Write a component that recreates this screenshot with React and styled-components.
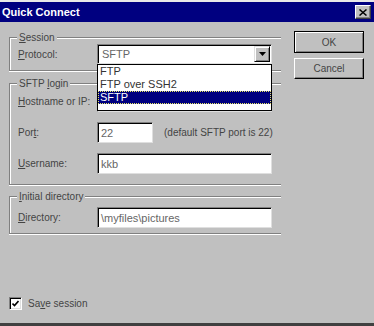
import React from 'react';
import styled, { createGlobalStyle } from 'styled-components';

const GlobalStyle = createGlobalStyle`
  html, body {
    margin: 0;
    padding: 0;
    background: #c0c0c0;
  }
  body {
    font-family: "Liberation Sans", Arial, sans-serif;
  }
`;

const Window = styled.div`
  width: 374px;
  height: 326px;
  box-sizing: border-box;
  background: #c0c0c0;
  border-top: 2px solid #e8e8e8;
  border-bottom: 3px solid #404040;
  display: flex;
  flex-direction: column;
  overflow: hidden;
`;

const TitleBar = styled.div`
  height: 20px;
  background: #000080;
  display: flex;
  align-items: center;
  justify-content: space-between;
  padding: 0 3px 0 2px;
`;

const Title = styled.span`
  color: #fff;
  font-weight: bold;
  font-size: 11px;
`;

const CloseButton = styled.div`
  width: 16px;
  height: 14px;
  box-sizing: border-box;
  background: #c0c0c0;
  border-top: 1px solid #fff;
  border-left: 1px solid #fff;
  border-right: 1px solid #404040;
  border-bottom: 1px solid #404040;
  box-shadow: inset -1px -1px 0 #808080;
  display: flex;
  align-items: center;
  justify-content: center;
`;

const Body = styled.div`
  flex: 1;
  display: flex;
  flex-direction: column;
  padding: 0 0 13px 9px;
`;

const Main = styled.div`
  display: flex;
  align-items: flex-start;
`;

const LeftColumn = styled.div`
  width: 272px;
  margin-top: 15px;
  display: flex;
  flex-direction: column;
`;

const ButtonColumn = styled.div`
  margin-left: 13px;
  margin-top: 9px;
  display: flex;
  flex-direction: column;
  gap: 5px;
`;

const Button = styled.div`
  width: 70px;
  height: ${p => (p.$default ? 22 : 21)}px;
  box-sizing: border-box;
  display: flex;
  align-items: center;
  justify-content: center;
  font-size: 10px;
  color: #444;
  background: #c0c0c0;
  border: 1px solid ${p => (p.$default ? '#000' : '#fff')};
  border-right-color: #000;
  border-bottom-color: #000;
  box-shadow: ${p =>
    p.$default
      ? 'inset 1px 1px 0 #fff, inset -1px -1px 0 #808080'
      : 'inset -1px -1px 0 #808080'};
`;

const Group = styled.div`
  position: relative;
  border: 1px solid #808080;
  border-right: none;
  box-shadow: inset 1px 1px 0 #fff, 0 1px 0 #fff;
  padding: ${p => p.$pad};
  margin-top: ${p => p.$mt || 0}px;
  display: flex;
  flex-direction: column;
  gap: 10px;
`;

const GroupLabel = styled.span`
  position: absolute;
  top: -7px;
  left: 7px;
  padding: 0 2px;
  background: #c0c0c0;
  font-size: 10px;
  line-height: 13px;
  color: #444;
`;

const Row = styled.div`
  display: grid;
  grid-template-columns: 79px auto;
  align-items: center;
`;

const Label = styled.span`
  font-size: 10px;
  color: #444;
`;

const Key = styled.span`
  text-decoration: underline;
`;

const Field = styled.div`
  width: ${p => p.$w || 175}px;
  height: 21px;
  box-sizing: border-box;
  background: #fff;
  border-top: 1px solid #808080;
  border-left: 1px solid #808080;
  border-right: 1px solid #dfdfdf;
  border-bottom: 1px solid #dfdfdf;
  box-shadow: inset 1px 1px 0 #000;
  padding-left: 3px;
  display: flex;
  align-items: center;
  font-size: 11px;
  color: #666;
`;

const PortLine = styled.div`
  display: flex;
  align-items: center;
  gap: 11px;
`;

const Hint = styled.span`
  font-size: 10px;
  color: #444;
`;

const Combo = styled.div`
  position: relative;
  width: 175px;
  height: 20px;
  box-sizing: border-box;
  background: #fff;
  border-top: 1px solid #808080;
  border-left: 1px solid #808080;
  border-right: 1px solid #dfdfdf;
  border-bottom: 1px solid #dfdfdf;
  box-shadow: inset 1px 1px 0 #000;
  display: flex;
  align-items: center;
  padding: 1px 1px 1px 4px;
  font-size: 11px;
  color: #666;
`;

const ComboText = styled.span`
  flex: 1;
`;

const ArrowButton = styled.div`
  width: 16px;
  height: 16px;
  box-sizing: border-box;
  background: #c0c0c0;
  border-top: 1px solid #dfdfdf;
  border-left: 1px solid #dfdfdf;
  border-right: 1px solid #000;
  border-bottom: 1px solid #000;
  box-shadow: inset 1px 1px 0 #fff, inset -1px -1px 0 #808080;
  display: flex;
  align-items: center;
  justify-content: center;
`;

const DropList = styled.div`
  position: absolute;
  top: 19px;
  left: -1px;
  width: 175px;
  height: 47px;
  box-sizing: border-box;
  background: #fff;
  border: 1px solid #000;
  z-index: 2;
  display: flex;
  flex-direction: column;
`;

const Option = styled.div`
  height: 13px;
  line-height: 13px;
  padding-left: 2px;
  font-size: 11px;
  color: ${p => (p.$selected ? '#fff' : '#333')};
  background: ${p => (p.$selected ? '#000080' : 'transparent')};
  outline: ${p => (p.$selected ? '1px dotted #e8e860' : 'none')};
  outline-offset: -1px;
`;

const Footer = styled.div`
  margin-top: auto;
  display: flex;
  align-items: center;
  gap: 6px;
`;

const CheckBox = styled.div`
  width: 13px;
  height: 13px;
  box-sizing: border-box;
  background: #fff;
  border-top: 1px solid #808080;
  border-left: 1px solid #808080;
  border-right: 1px solid #fff;
  border-bottom: 1px solid #fff;
  box-shadow: inset 1px 1px 0 #000, inset -1px -1px 0 #dfdfdf;
  display: flex;
  align-items: center;
  justify-content: center;
`;

const protocols = ['FTP', 'FTP over SSH2', 'SFTP'];

export default function App() {
  return (
    <>
      <GlobalStyle />
      <Window>
        <TitleBar>
          <Title>Quick Connect</Title>
          <CloseButton>
            <svg width="8" height="7" viewBox="0 0 8 7">
              <path d="M0.5 0.5 L7.5 6.5 M7.5 0.5 L0.5 6.5" stroke="#000" strokeWidth="1.5" />
            </svg>
          </CloseButton>
        </TitleBar>
        <Body>
          <Main>
            <LeftColumn>
              <Group $pad="6px 8px 6px 8px">
                <GroupLabel><Key>S</Key>ession</GroupLabel>
                <Row>
                  <Label><Key>P</Key>rotocol:</Label>
                  <Combo>
                    <ComboText>SFTP</ComboText>
                    <ArrowButton>
                      <svg width="7" height="4" viewBox="0 0 7 4">
                        <path d="M0 0 H7 L3.5 4 Z" fill="#000" />
                      </svg>
                    </ArrowButton>
                    <DropList>
                      {protocols.map(p => (
                        <Option key={p} $selected={p === 'SFTP'}>{p}</Option>
                      ))}
                    </DropList>
                  </Combo>
                </Row>
              </Group>

              <Group $pad="7px 8px 10px 8px" $mt={12}>
                <GroupLabel>SFTP <Key>l</Key>ogin</GroupLabel>
                <Row>
                  <Label><Key>H</Key>ostname or IP:</Label>
                  <Field />
                </Row>
                <Row>
                  <Label>Por<Key>t</Key>:</Label>
                  <PortLine>
                    <Field $w={56}>22</Field>
                    <Hint>(default SFTP port is 22)</Hint>
                  </PortLine>
                </Row>
                <Row>
                  <Label><Key>U</Key>sername:</Label>
                  <Field>kkb</Field>
                </Row>
              </Group>

              <Group $pad="10px 8px 5px 8px" $mt={11}>
                <GroupLabel><Key>I</Key>nitial directory</GroupLabel>
                <Row>
                  <Label><Key>D</Key>irectory:</Label>
                  <Field>\myfiles\pictures</Field>
                </Row>
              </Group>
            </LeftColumn>

            <ButtonColumn>
              <Button $default>OK</Button>
              <Button>Cancel</Button>
            </ButtonColumn>
          </Main>

          <Footer>
            <CheckBox>
              <svg width="7" height="7" viewBox="0 0 7 7">
                <path d="M0.5 3.5 L2.5 5.5 L6.5 1" stroke="#000" strokeWidth="1.6" fill="none" />
              </svg>
            </CheckBox>
            <Label>Sa<Key>v</Key>e session</Label>
          </Footer>
        </Body>
      </Window>
    </>
  );
}
